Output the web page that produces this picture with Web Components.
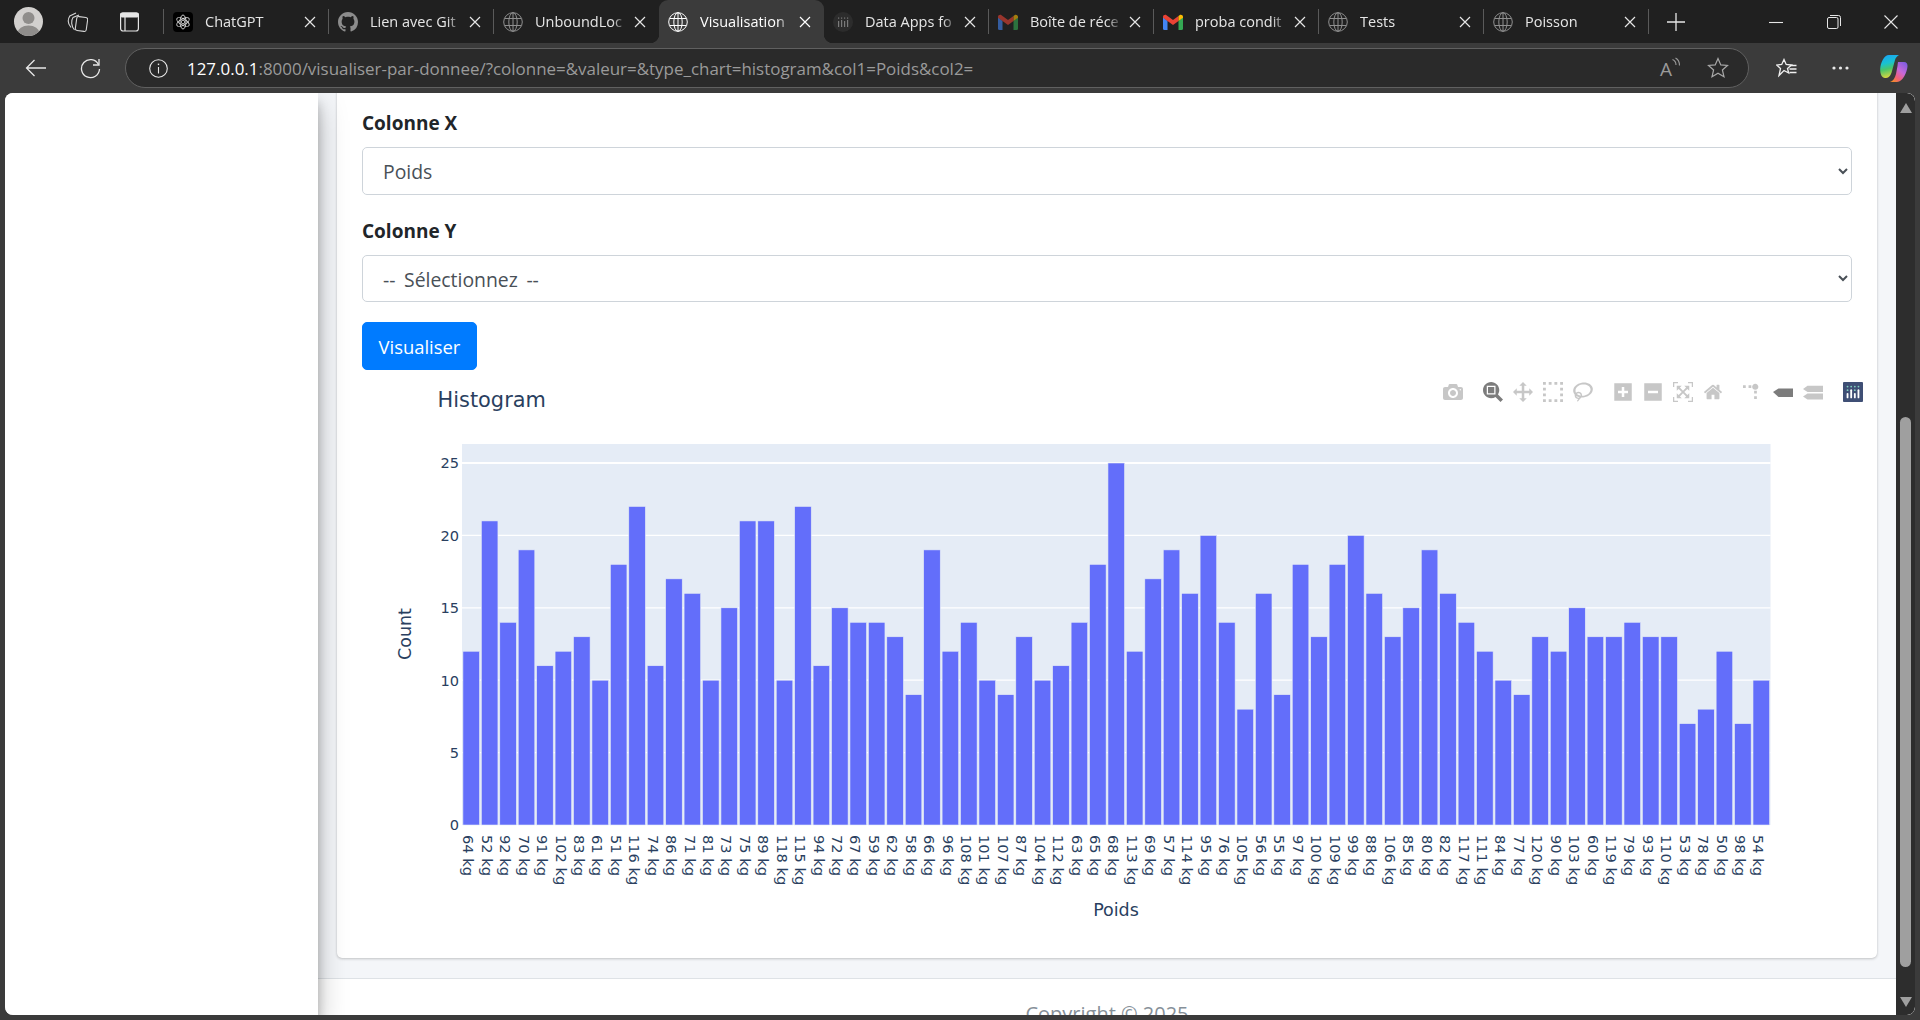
<!DOCTYPE html>
<html lang="fr">
<head>
<meta charset="utf-8">
<title>Visualisation</title>
<style>
    html, body { margin: 0; height: 100%; overflow: hidden; background: #3b3b3b; }
</style>
</head>
<body>
<browser-window>
    <tab-bar>
        <browser-tab label="ChatGPT" icon="chatgpt"></browser-tab>
        <browser-tab label="Lien avec Git" icon="github"></browser-tab>
        <browser-tab label="UnboundLoc" icon="globe" nosep></browser-tab>
        <browser-tab label="Visualisation" icon="globe" active nosep></browser-tab>
        <browser-tab label="Data Apps fo" icon="dataapps"></browser-tab>
        <browser-tab label="Boîte de réce" icon="gmaildim"></browser-tab>
        <browser-tab label="proba condit" icon="gmail"></browser-tab>
        <browser-tab label="Tests" icon="globe"></browser-tab>
        <browser-tab label="Poisson" icon="globe"></browser-tab>
    </tab-bar>
    <address-toolbar></address-toolbar>
    <page-frame>
        <form-card>
            <select-field label="Colonne X" value="Poids"></select-field>
            <select-field label="Colonne Y" value="-- Sélectionnez --"></select-field>
            <primary-button>Visualiser</primary-button>
            <histogram-chart></histogram-chart>
        </form-card>
    </page-frame>
</browser-window>

<script>
const FONT = '"Open Sans", "Noto Sans", sans-serif';

const TAB_ICONS = {
    chatgpt: `<svg width="20" height="20" viewBox="0 0 20 20"><rect width="20" height="20" rx="4" fill="#000"/>
        <g fill="none" stroke="#d8d8d8" stroke-width=".9"><ellipse cx="10" cy="10" rx="3" ry="7"/><ellipse cx="10" cy="10" rx="3" ry="7" transform="rotate(60 10 10)"/><ellipse cx="10" cy="10" rx="3" ry="7" transform="rotate(120 10 10)"/><circle cx="10" cy="10" r="1.800"/></g></svg>`,
    github: `<svg width="20" height="20" viewBox="0 0 16 16"><path fill="#8c8c8c" d="M8 0C3.58 0 0 3.58 0 8c0 3.54 2.29 6.53 5.47 7.59.4.07.55-.17.55-.38 0-.19-.01-.82-.01-1.49-2.01.37-2.53-.49-2.69-.94-.09-.23-.48-.94-.82-1.13-.28-.15-.68-.52-.01-.53.63-.01 1.08.58 1.23.82.72 1.21 1.87.87 2.33.66.07-.52.28-.87.51-1.07-1.78-.2-3.64-.89-3.64-3.95 0-.87.31-1.59.82-2.15-.08-.2-.36-1.02.08-2.12 0 0 .67-.21 2.2.82.64-.18 1.32-.27 2-.27.68 0 1.36.09 2 .27 1.53-1.04 2.2-.82 2.2-.82.44 1.1.16 1.92.08 2.12.51.56.82 1.27.82 2.15 0 3.07-1.87 3.75-3.65 3.95.29.25.54.73.54 1.48 0 1.07-.01 1.93-.01 2.2 0 .21.15.46.55.38A8.013 8.013 0 0016 8c0-4.42-3.58-8-8-8z"/></svg>`,
    globe: `<svg width="20" height="20" viewBox="0 0 20 20" fill="none" stroke="currentColor" stroke-width="1"><circle cx="10" cy="10" r="9.3"/><ellipse cx="10" cy="10" rx="4.2" ry="9.3"/><path d="M10 .7v18.6M1.6 6.5h16.8M1.6 13.5h16.8"/></svg>`,
    dataapps: `<svg width="20" height="20" viewBox="0 0 20 20"><circle cx="10" cy="10" r="10" fill="#2c2c2c"/><g fill="#7a7a7a"><rect x="5" y="9" width="1.2" height="6"/><rect x="8" y="8" width="1.2" height="7"/><rect x="11" y="9" width="1.2" height="6"/><rect x="14" y="8" width="1.2" height="7"/><rect x="5" y="5.5" width="1.2" height="1.2"/><rect x="8" y="5.5" width="1.2" height="1.2"/><rect x="11" y="5.5" width="1.2" height="1.2"/><rect x="14" y="5.5" width="1.2" height="1.2"/></g></svg>`,
    gmail: gmailIcon(1),
    gmaildim: gmailIcon(0.6)
};

function gmailIcon(opacity) {
    return `<svg width="20" height="20" viewBox="0 -2 20 20" opacity="${opacity}">
        <path fill="#4285f4" d="M0 3v11.5A1.5 1.5 0 0 0 1.500 16H4.500V7z"/>
        <path fill="#34a853" d="M20 3v11.500A1.500 1.500 0 0 1 18.500 16H15.500V7z"/>
        <path fill="#ea4335" d="M4.500 7L10 11l5.500-4V2L10 6 4.500 2zM0 3C0 1 2.200.2 3.500 1.200L4.500 2v5L0 3.700z"/>
        <path fill="#fbbc04" d="M15.500 2l1-.8C17.800.2 20 1 20 3v.7L15.500 7z"/></svg>`;
}

class BrowserWindow extends HTMLElement {
    constructor() {
        super();
        this.attachShadow({ mode: 'open' });
        this.shadowRoot.innerHTML = `
            <style>
                :host { display: flex; flex-direction: column; width: 1920px; height: 1020px; background: #3b3b3b; font-family: ${FONT}; }
            </style>
            <slot></slot>
        `;
    }
}

class TabBar extends HTMLElement {
    constructor() {
        super();
        this.attachShadow({ mode: 'open' });
        this.shadowRoot.innerHTML = `
            <style>
                :host { display: flex; align-items: center; height: 43px; background: #202020; color: #e6e6e6; flex: none; }
                .avatar { margin-left: 14px; width: 29px; height: 29px; display: block; }
                .collections { margin-left: 24px; }
                .tabview { margin-left: 32px; }
                .sep { margin-left: 24px; width: 1px; height: 25px; background: #5a5a5a; }
                .tabs { display: flex; align-items: stretch; height: 43px; }
                .plus { margin-left: 17px; }
                .controls { margin-left: auto; display: flex; height: 43px; }
                .controls div { width: 57.5px; display: flex; align-items: center; justify-content: center; }
            </style>
            <svg class="avatar" viewBox="0 0 29 29"><defs><clipPath id="a"><circle cx="14.500" cy="14.500" r="14.500"/></clipPath></defs>
                <g clip-path="url(#a)"><rect width="29" height="29" fill="#d2d0ce"/><circle cx="14.500" cy="11" r="6" fill="#8f8d8b"/><ellipse cx="14.500" cy="26" rx="11" ry="7.500" fill="#8f8d8b"/></g></svg>
            <svg class="collections" width="21" height="20" viewBox="0 0 21 20" fill="none" stroke="#d6d6d6" stroke-width="1.100"><rect x="9" y="5" width="11" height="14" rx="2" transform="rotate(8 14.500 12)"/><path d="M7.500 18C4 14 4 8.500 6 5.500L12 3"/><path d="M4 15.500C1 12 .6 7.500 2.800 4L9 1"/></svg>
            <svg class="tabview" width="19" height="20" viewBox="0 0 19 20" fill="none" stroke="#e6e6e6" stroke-width="1.200"><rect x=".6" y="1" width="17.800" height="18" rx="2.500"/><rect x=".6" y="1" width="17.800" height="4" rx="1.500" fill="#e6e6e6"/><path d="M5 5v14"/></svg>
            <span class="sep"></span>
            <div class="tabs"><slot></slot></div>
            <svg class="plus" width="20" height="20" viewBox="0 0 20 20" stroke="#e6e6e6" stroke-width="1.300"><path d="M10 1v18M1 10h18"/></svg>
            <div class="controls">
                <div><svg width="14" height="14" viewBox="0 0 14 14" stroke="#e6e6e6" stroke-width="1.100"><path d="M0 7.500h14"/></svg></div>
                <div><svg width="14" height="14" viewBox="0 0 14 14" fill="none" stroke="#e6e6e6" stroke-width="1"><rect x=".5" y="2.500" width="10.500" height="11" rx="1.500"/><path d="M3 .5h8.500a2 2 0 0 1 2 2V11"/></svg></div>
                <div><svg width="14" height="14" viewBox="0 0 14 14" stroke="#e6e6e6" stroke-width="1.100"><path d="M.5.5l13 13M13.500.5l-13 13"/></svg></div>
            </div>
        `;
    }
}

class BrowserTab extends HTMLElement {
    connectedCallback() {
        if (this.shadowRoot) return;
        this.attachShadow({ mode: 'open' });
        const icon = TAB_ICONS[this.getAttribute('icon')];
        const hasSep = !this.hasAttribute('nosep');
        this.shadowRoot.innerHTML = `
            <style>
                :host { display: flex; align-items: center; position: relative; box-sizing: border-box; width: 165px; height: 43px; padding-left: 9px; color: #e6e6e6; font-size: 14.500px; }
                :host([active]) { background: #3b3b3b; border-radius: 9px 9px 0 0; color: #fff; }
                :host([active])::before, :host([active])::after { content: ''; position: absolute; bottom: 0; width: 9px; height: 9px; }
                :host([active])::before { left: -9px; background: radial-gradient(circle at 0 0, transparent 9px, #3b3b3b 9.500px); }
                :host([active])::after { right: -9px; background: radial-gradient(circle at 100% 0, transparent 9px, #3b3b3b 9.500px); }
                .icon { width: 20px; height: 20px; flex: none; color: #8f8f8f; display: block; }
                :host([active]) .icon { color: #fff; }
                .label { margin-left: 12px; width: 92px; flex: none; white-space: nowrap; -webkit-mask-image: linear-gradient(to right, #000 84%, transparent); mask-image: linear-gradient(to right, #000 84%, transparent); }
                .close { margin-left: 6px; flex: none; }
                .sep { margin-left: auto; width: 1px; height: 25px; background: #5a5a5a; flex: none; }
            </style>
            <span class="icon">${icon}</span>
            <span class="label">${this.getAttribute('label')}</span>
            <svg class="close" width="14" height="14" viewBox="0 0 14 14" stroke="currentColor" stroke-width="1.200"><path d="M2 2l10 10M12 2L2 12"/></svg>
            ${hasSep ? '<span class="sep"></span>' : ''}
        `;
    }
}

class AddressToolbar extends HTMLElement {
    constructor() {
        super();
        this.attachShadow({ mode: 'open' });
        this.shadowRoot.innerHTML = `
            <style>
                :host { display: flex; align-items: center; height: 50px; flex: none; background: #3b3b3b; padding-left: 25px; }
                .reload { margin-left: 34px; }
                .address { margin-left: 24px; width: 1624px; height: 40px; box-sizing: border-box; display: flex; align-items: center; background: #2a2a2a; border: 1px solid #606060; border-radius: 20px; padding-left: 23px; }
                .url { margin-left: 19px; font-size: 16.950px; color: #9a9a9a; white-space: nowrap; flex: 1; }
                .url b { font-weight: 400; color: #fff; }
                .aloud { margin-right: 27px; overflow: visible; }
                .star { margin-right: 19px; }
                .fav { margin-left: 27px; }
                .dots { margin-left: 35px; }
                .copilot { margin-left: 31px; }
            </style>
            <svg width="21" height="20" viewBox="0 0 21 20" fill="none" stroke="#e8e8e8" stroke-width="1.300"><path d="M21 10H1.500M9.500 2l-8 8 8 8"/></svg>
            <svg class="reload" width="21" height="21" viewBox="0 0 21 21" fill="none" stroke="#e8e8e8" stroke-width="1.300"><path d="M18.500 6.500A9 9 0 1 0 19.500 11"/><path d="M19 1v6h-6"/></svg>
            <div class="address">
                <svg width="19" height="19" viewBox="0 0 19 19" fill="none" stroke="#e8e8e8" stroke-width="1.100"><circle cx="9.500" cy="9.500" r="8.800"/><path d="M9.500 8v6.500"/><path d="M9.500 4.600v1.500" stroke-width="1.400"/></svg>
                <span class="url"><b>127.0.0.1</b>:8000/visualiser-par-donnee/?colonne=&amp;valeur=&amp;type_chart=histogram&amp;col1=Poids&amp;col2=</span>
                <svg class="aloud" width="20" height="20" viewBox="0 0 20 20" fill="none" stroke="#9a9a9a" stroke-width="1.100"><text x="0" y="18" font-size="19" font-family="Open Sans" fill="#9a9a9a" stroke="none">A</text><path d="M12.500 1.500c2.200 1 3.500 3 3.500 5.500M15.500 0c3 1.500 4 4 4 7.500"/></svg>
                <svg class="star" width="22" height="22" viewBox="0 0 22 22" fill="none" stroke="#a8a8a8" stroke-width="1.200"><path d="M11 1.500l2.800 6.400 6.700.6-5.100 4.500 1.600 6.800-6-3.600-6 3.600 1.600-6.800L1.500 8.500l6.700-.6z"/></svg>
            </div>
            <svg class="fav" width="21" height="20" viewBox="0 0 21 20" fill="none" stroke="#f0f0f0" stroke-width="1.300"><path d="M8 1.500l2.200 5 5.300.5-4 3.500 1.200 4.500-4.700-2.500-5 5 1.500-7L.7 7l5-.5z"/><path d="M14 7.500h6.500M13.500 11h7M13.500 14.500h7"/></svg>
            <svg class="dots" width="17" height="4" viewBox="0 0 17 4" fill="#e8e8e8"><circle cx="2" cy="2" r="1.600"/><circle cx="8.500" cy="2" r="1.600"/><circle cx="15" cy="2" r="1.600"/></svg>
            <svg class="copilot" width="28" height="27" viewBox="0 0 28 27">
                <defs>
                    <linearGradient id="cl" x1=".3" y1="0" x2=".5" y2="1"><stop offset="0" stop-color="#1aa6f4"/><stop offset=".35" stop-color="#19c3d0"/><stop offset=".6" stop-color="#4ac66a"/><stop offset="1" stop-color="#e8d83a"/></linearGradient>
                    <linearGradient id="cr" x1=".9" y1="0" x2=".2" y2="1"><stop offset="0" stop-color="#7a5ce0"/><stop offset=".45" stop-color="#c868d8"/><stop offset=".75" stop-color="#f0607a"/><stop offset="1" stop-color="#f28a2c"/></linearGradient>
                </defs>
                <path fill="url(#cr)" d="M18 7H24C26.500 7 27.800 9 27.500 11.500C27 17 23 27 17 27H10C13 26 15 23 16 19L17.500 11C17.700 9.500 17.800 8 18 7Z"/>
                <path fill="url(#cl)" d="M9 0H19C17 1 15.500 3 15 5L12 16C11 20 9 23 6 23H5C2 23 0 19 .2 14C.5 8 4 0 9 0Z"/>
            </svg>
        `;
    }
}

class PageFrame extends HTMLElement {
    constructor() {
        super();
        this.attachShadow({ mode: 'open' });
        this.shadowRoot.innerHTML = `
            <style>
                :host { display: flex; flex: none; height: 922px; margin: 0 5px; border-radius: 8px; overflow: hidden; background: #fff; }
                .sidebar { width: 313px; flex: none; background: #fff; position: relative; z-index: 2; box-shadow: 0 14px 28px rgba(0,0,0,.25), 0 10px 10px rgba(0,0,0,.22); }
                .main { flex: 1; min-width: 0; display: flex; flex-direction: column; overflow: hidden; }
                .content { background: #f4f6f9; padding: 0 19px 19.500px; flex: none; }
                footer { border-top: 1px solid #dee2e6; background: #fff; flex: 1; box-sizing: border-box; padding-top: 20px; text-align: center; color: #869099; font-size: 20px; line-height: 30px; white-space: nowrap; }
                .scrollbar { width: 19px; flex: none; background: #2d2d2d; border-radius: 0 8px 8px 0; display: flex; flex-direction: column; align-items: center; }
                .up { margin-top: 10px; width: 0; height: 0; border: 6.500px solid transparent; border-top: 0; border-bottom: 10px solid #9f9f9f; }
                .thumb { margin-top: 304px; width: 11px; height: 550px; border-radius: 6px; background: #9f9f9f; }
                .down { margin-top: 30px; width: 0; height: 0; border: 6.500px solid transparent; border-bottom: 0; border-top: 10px solid #9f9f9f; }
            </style>
            <aside class="sidebar"></aside>
            <div class="main">
                <div class="content"><slot></slot></div>
                <footer>Copyright © 2025</footer>
            </div>
            <div class="scrollbar"><span class="up"></span><span class="thumb"></span><span class="down"></span></div>
        `;
    }
}

class FormCard extends HTMLElement {
    constructor() {
        super();
        this.attachShadow({ mode: 'open' });
        this.shadowRoot.innerHTML = `
            <style>
                :host { display: block; margin-top: -11px; padding: 25px 25px 25.500px; background: #fff; border-radius: 0 0 5px 5px; box-shadow: 0 0 1px rgba(0,0,0,.125), 0 1px 3px rgba(0,0,0,.2); font-size: 20px; line-height: 30px; color: #212529; }
            </style>
            <slot></slot>
        `;
    }
}

class SelectField extends HTMLElement {
    connectedCallback() {
        if (this.shadowRoot) return;
        this.attachShadow({ mode: 'open' });
        this.shadowRoot.innerHTML = `
            <style>
                :host { display: block; margin-bottom: 20px; }
                label { display: block; padding-top: 1px; margin-bottom: 9px; font-weight: 700; font-size: 19px; line-height: 30px; color: #212529; }
                select { display: block; width: 100%; height: 47.500px; box-sizing: border-box; padding: 2px 16px 0; background: #fff; border: 1px solid #ced4da; border-radius: 5px; color: #495057; font: 19.400px ${FONT}; word-spacing: 3.500px; }
            </style>
            <label for="f">${this.getAttribute('label')}</label>
            <select id="f"><option>${this.getAttribute('value')}</option></select>
        `;
    }
}

class PrimaryButton extends HTMLElement {
    constructor() {
        super();
        this.attachShadow({ mode: 'open' });
        this.shadowRoot.innerHTML = `
            <style>
                :host { display: block; margin-bottom: .5px; }
                button { display: block; width: 115px; height: 47.500px; padding: 2px 0 0; box-sizing: border-box; border: 1px solid #007bff; border-radius: 5px; background: #007bff; color: #fff; font: 18.400px ${FONT}; }
            </style>
            <button><slot></slot></button>
        `;
    }
}

// donnees lues sur le graphique : [poids, effectif]
const HISTOGRAM = [
    [64,12],[52,21],[92,14],[70,19],[91,11],[102,12],[83,13],[61,10],[51,18],[116,22],[74,11],[86,17],
    [71,16],[81,10],[73,15],[75,21],[89,21],[118,10],[115,22],[94,11],[72,15],[67,14],[59,14],[62,13],
    [58,9],[66,19],[96,12],[108,14],[101,10],[107,9],[87,13],[104,10],[112,11],[63,14],[65,18],[68,25],
    [113,12],[69,17],[57,19],[114,16],[95,20],[76,14],[105,8],[56,16],[55,9],[97,18],[100,13],[109,18],
    [99,20],[88,16],[106,13],[85,15],[80,19],[82,16],[117,14],[111,12],[84,10],[77,9],[120,13],[90,12],
    [103,15],[60,13],[119,13],[79,14],[93,13],[110,13],[53,7],[78,8],[50,12],[98,7],[54,10]
];

const MODEBAR = [
    [
        { w: 1000, d: 'm500 450c-83 0-150-67-150-150 0-83 67-150 150-150 83 0 150 67 150 150 0 83-67 150-150 150z m400 150h-120c-16 0-34 13-39 29l-31 93c-6 15-23 28-40 28h-340c-16 0-34-13-39-28l-31-94c-6-15-23-28-40-28h-120c-55 0-100-45-100-100v-450c0-55 45-100 100-100h800c55 0 100 45 100 100v450c0 55-45 100-100 100z m-400-550c-138 0-250 112-250 250 0 138 112 250 250 250 138 0 250-112 250-250 0-138-112-250-250-250z m365 380c-19 0-35 16-35 35 0 19 16 35 35 35 19 0 35-16 35-35 0-19-16-35-35-35z' }
    ],
    [
        { w: 1000, on: true, d: 'm1000-25l-250 251c40 63 63 138 63 218 0 224-182 406-407 406-224 0-406-182-406-406s183-406 407-406c80 0 155 22 218 62l250-250 125 125z m-812 250l0 438 437 0 0-438-437 0z m62 375l313 0 0-312-313 0 0 312z' },
        { w: 1000, d: 'm1000 350l-187 188 0-125-250 0 0 250 125 0-188 187-187-187 125 0 0-250-250 0 0 125-188-188 186-187 0 125 252 0 0-250-125 0 187-188 188 188-125 0 0 250 250 0 0-126 187 188z' },
        { w: 1000, d: 'm0 850l0-143 143 0 0 143-143 0z m286 0l0-143 143 0 0 143-143 0z m285 0l0-143 143 0 0 143-143 0z m286 0l0-143 143 0 0 143-143 0z m-857-286l0-143 143 0 0 143-143 0z m857 0l0-143 143 0 0 143-143 0z m-857-285l0-143 143 0 0 143-143 0z m857 0l0-143 143 0 0 143-143 0z m-857-286l0-143 143 0 0 143-143 0z m286 0l0-143 143 0 0 143-143 0z m285 0l0-143 143 0 0 143-143 0z m286 0l0-143 143 0 0 143-143 0z' },
        { w: 1031, d: 'm1018 538c-36 207-290 336-568 286-277-48-473-256-436-463 10-57 36-108 76-151-13-66 11-137 68-183 34-28 75-41 114-42l-55-70 0 0c-2-1-3-2-4-3-10-14-8-34 5-45 14-11 34-8 45 4 1 1 2 3 2 5l0 0 113 140c16 11 31 24 45 40 4 3 6 7 8 11 48-3 100 0 151 9 278 48 473 255 436 462z m-624-379c-80 14-149 48-197 96 42 42 109 47 156 9 33-26 47-66 41-105z m-187-74c-19 16-33 37-39 60 50-32 109-55 174-68-42-25-95-24-135 8z m360 75c-34-7-69-9-102-8 8 62-16 128-68 170-73 59-175 54-244-5-9 20-16 40-20 61-28 159 121 317 333 354s407-60 434-217c28-159-121-318-333-355z' }
    ],
    [
        { w: 875, d: 'm1 787l0-875 875 0 0 875-875 0z m687-500l-187 0 0-187-125 0 0 187-188 0 0 125 188 0 0 187 125 0 0-187 187 0 0-125z' },
        { w: 875, d: 'm0 788l0-876 875 0 0 876-875 0z m688-500l-500 0 0 125 500 0 0-125z' },
        { w: 1000, d: 'm250 850l-187 0-63 0 0-62 0-188 63 0 0 188 187 0 0 62z m688 0l-188 0 0-62 188 0 0-188 62 0 0 188 0 62-62 0z m-875-938l0 188-63 0 0-188 0-62 63 0 187 0 0 62-187 0z m875 188l0-188-188 0 0-62 188 0 62 0 0 62 0 188-62 0z m-125 188l-1 0-93-94-156 156 156 156 92-93 2 0 0 250-250 0 0-2 93-92-156-156-156 156 94 92 0 2-250 0 0-250 0 0 93 93 157-156-157-156-93 94 0 0 0-250 250 0 0 0-94 93 156 157 156-157-93-93 0 0 250 0 0 250z' },
        { w: 929, d: 'm786 296v-267q0-15-11-26t-25-10h-214v214h-143v-214h-214q-15 0-25 10t-11 26v267q0 1 0 2t0 2l321 264 321-264q1-1 1-4z m124 39l-34-41q-5-5-12-6h-2q-7 0-12 3l-386 322-386-322q-7-4-13-4-7 2-12 7l-35 41q-4 5-3 13t6 12l401 334q18 15 42 15t43-15l136-114v109q0 8 5 13t13 5h107q8 0 13-5t5-13v-227l122-102q5-5 6-12t-4-13z' }
    ],
    [
        { w: 1000, spike: true, d: 'M512 409c0-57-46-104-103-104-57 0-104 47-104 104 0 57 47 103 104 103 57 0 103-46 103-103z m-327-39l92 0 0 92-92 0z m-185 0l92 0 0 92-92 0z m370-186l92 0 0 93-92 0z m0-184l92 0 0 92-92 0z' },
        { raw: 'M0 10L5.500 6.500H20V15H5.500Z', on: true },
        { raw: 'M0 7L4.500 3.800H20V10H4.500ZM0 14.500L4.500 11.500H20V17.500H4.500Z' }
    ]
];

class ModeBar extends HTMLElement {
    constructor() {
        super();
        this.attachShadow({ mode: 'open' });
        const groups = MODEBAR.map(group => `<div class="group">${group.map(btn => this.icon(btn)).join('')}</div>`).join('');
        this.shadowRoot.innerHTML = `
            <style>
                :host { display: flex; gap: 20px; position: absolute; top: 12px; right: -11px; }
                .group { display: flex; gap: 10px; }
                svg { display: block; width: 20px; height: 20px; fill: rgba(68,68,68,.3); }
                svg.on { fill: rgba(68,68,68,.7); }
            </style>
            ${groups}
            <div class="group">
                <svg viewBox="0 0 132 132" style="fill:none">
                    <rect width="132" height="132" rx="6" fill="#3f4f75"/>
                    <g fill="#80cfbe"><circle cx="78" cy="54" r="6"/><circle cx="102" cy="30" r="6"/><circle cx="78" cy="30" r="6"/><circle cx="54" cy="30" r="6"/><circle cx="30" cy="30" r="6"/><circle cx="30" cy="54" r="6"/></g>
                    <g fill="#fff"><path d="M30,72a6,6,0,0,0-6,6v24a6,6,0,0,0,12,0V78A6,6,0,0,0,30,72Z"/><path d="M78,72a6,6,0,0,0-6,6v24a6,6,0,0,0,12,0V78A6,6,0,0,0,78,72Z"/><path d="M54,48a6,6,0,0,0-6,6v48a6,6,0,0,0,12,0V54A6,6,0,0,0,54,48Z"/><path d="M102,48a6,6,0,0,0-6,6v48a6,6,0,0,0,12,0V54A6,6,0,0,0,102,48Z"/></g>
                </svg>
            </div>
        `;
    }

    icon(btn) {
        const cls = btn.on ? ' class="on"' : '';
        if (btn.raw) return `<svg${cls} viewBox="0 0 20 20"><path d="${btn.raw}"/></svg>`;
        const transform = btn.spike ? 'matrix(1.5 0 0 -1.5 0 850)' : 'matrix(1 0 0 -1 0 850)';
        return `<svg${cls} viewBox="0 0 ${btn.w} 1000"><path transform="${transform}" d="${btn.d}"/></svg>`;
    }
}

class HistogramChart extends HTMLElement {
    constructor() {
        super();
        this.attachShadow({ mode: 'open' });
        this.render();
    }

    render() {
        const left = 100, right = 1408.500, top = 74, bottom = 455;
        const unit = (bottom - 93) / 25;
        const pitch = (right - left) / HISTOGRAM.length;
        const barW = pitch * 0.9;

        let grid = '', yTicks = '', bars = '', xTicks = '';
        for (let v = 0; v <= 25; v += 5) {
            const y = bottom - v * unit;
            if (v > 0) grid += `<path d="M${left} ${y}H${right}" stroke="#fff" stroke-width="${v === 25 ? 2 : 1.25}"/>`;
            yTicks += `<text x="97" y="${y + 5.4}" text-anchor="end">${v}</text>`;
        }
        HISTOGRAM.forEach(([kg, count], i) => {
            const cx = left + pitch * (i + 0.5);
            const h = count * unit;
            bars += `<rect x="${cx - barW / 2}" y="${bottom - h}" width="${barW}" height="${h}"/>`;
            xTicks += `<text transform="translate(${cx - 7.8} 465) rotate(90)">${kg} kg</text>`;
        });

        this.shadowRoot.innerHTML = `
            <style>
                :host { display: block; position: relative; height: 562.500px; }
                svg.plot { display: block; width: 1490px; height: 562.500px; font-family: "DejaVu Sans", Verdana, sans-serif; fill: #2a3f5f; }
                .ticks { font-size: 14.600px; }
                .bars rect { fill: #636efa; stroke: #e5ecf6; stroke-width: .6; }
            </style>
            <svg class="plot" viewBox="0 0 1490 562.500">
                <text x="75.500" y="37" font-size="20.900">Histogram</text>
                <rect x="${left}" y="${top}" width="${right - left}" height="${bottom - top}" fill="#e5ecf6"/>
                ${grid}
                <g class="bars">${bars}</g>
                <g class="ticks">${yTicks}${xTicks}</g>
                <text transform="translate(49 264) rotate(-90)" text-anchor="middle" font-size="17.500">Count</text>
                <text x="754" y="546" text-anchor="middle" font-size="17.500">Poids</text>
            </svg>
            <mode-bar></mode-bar>
        `;
    }
}

customElements.define('browser-window', BrowserWindow);
customElements.define('tab-bar', TabBar);
customElements.define('browser-tab', BrowserTab);
customElements.define('address-toolbar', AddressToolbar);
customElements.define('page-frame', PageFrame);
customElements.define('form-card', FormCard);
customElements.define('select-field', SelectField);
customElements.define('primary-button', PrimaryButton);
customElements.define('mode-bar', ModeBar);
customElements.define('histogram-chart', HistogramChart);
</script>
</body>
</html>
